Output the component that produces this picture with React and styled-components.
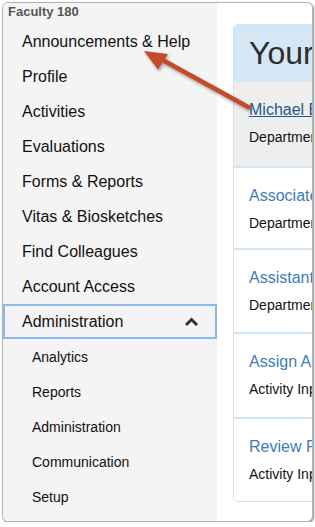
import styled, { createGlobalStyle } from "styled-components"

const Global = createGlobalStyle`
  html, body {
    margin : 0;
    padding : 0;
    background : #ffffff;
    font-family : "Liberation Sans", Arial, sans-serif;
  }
`;

const Frame = styled.div`
  position : relative;
  box-sizing : border-box;
  margin : 2px 0 0 2px;
  width : 311px;
  height : 520px;
  border : 1px solid #b4b4b4;
  border-radius : 6px;
  box-shadow : 1px 1px 2px rgba(0, 0, 0, 0.45);
  overflow : hidden;
  display : flex;
  background : #ffffff;
`;

const Sidebar = styled.div`
  width : 214px;
  flex : none;
  background : #f4f4f4;
  display : flex;
  flex-flow : column;
`;

const Brand = styled.div`
  font-size : 13px;
  font-weight : 700;
  line-height : 16px;
  color : #555555;
  padding : 1px 5px 4px;
`;

const NavItem = styled.div`
  box-sizing : border-box;
  height : 35px;
  display : flex;
  align-items : center;
  justify-content : space-between;
  padding-left : ${p => (p.$sub ? 29 : 19)}px;
  padding-right : 18px;
  font-size : ${p => (p.$sub ? 14 : 16)}px;
  color : #111111;
  border : ${p => (p.$active ? "2px solid #8cbaea" : "none")};
  ${p => p.$active && "padding-left : 17px; padding-right : 16px;"}
`;

const Main = styled.div`
  flex : 1;
  min-width : 0;
  overflow : hidden;
  padding : 21px 0 0 16px;
`;

const Card = styled.div`
  width : 300px;
  border : 1px solid #cfe2f2;
  border-radius : 5px;
  overflow : hidden;
`;

const CardHead = styled.div`
  height : 57px;
  background : #d5e7f5;
  display : flex;
  align-items : center;
  padding-left : 15px;
  font-size : 32px;
  color : #2e2e2e;
  white-space : nowrap;
`;

const Row = styled.div`
  box-sizing : border-box;
  height : ${p => p.$h}px;
  padding : 17px 15px 0;
  background : ${p => (p.$highlight ? "#eeeeee" : "#ffffff")};
  border-top : ${p => (p.$first ? "none" : "2px solid #d3e6f5")};
  white-space : nowrap;
`;

const RowLink = styled.div`
  font-size : 16px;
  line-height : 22px;
  color : ${p => (p.$underline ? "#24588a" : "#3d7dba")};
  text-decoration : ${p => (p.$underline ? "underline" : "none")};
  margin-bottom : 6px;
`;

const RowSub = styled.div`
  font-size : 14px;
  line-height : 20px;
  color : #111111;
`;

const Chevron = () => (
  <svg width="15" height="10" viewBox="0 0 15 10">
    <polyline points="2,8 7.5,2.5 13,8" fill="none" stroke="#333" strokeWidth="3" />
  </svg>
);

const Arrow = styled.svg`
  position : absolute;
  left : 0;
  top : 0;
  pointer-events : none;
  filter : drop-shadow(1px 2px 1.5px rgba(0, 0, 0, 0.35));
`;

const navs = [
  "Announcements & Help",
  "Profile",
  "Activities",
  "Evaluations",
  "Forms & Reports",
  "Vitas & Biosketches",
  "Find Colleagues",
  "Account Access",
];

const subs = ["Analytics", "Reports", "Administration", "Communication", "Setup"];

const rows = [
  { title: "Michael Brown", sub: "Department", h: 84, highlight: true },
  { title: "Associate Professor", sub: "Department", h: 82 },
  { title: "Assistant Professor", sub: "Department", h: 84 },
  { title: "Assign Activities", sub: "Activity Input", h: 85 },
  { title: "Review Profiles", sub: "Activity Input", h: 84 },
];

const App = () => {
  return (<>
    <Global />
    <Frame>
      <Sidebar>
        <Brand>Faculty 180</Brand>
        {navs.map((n) => (
          <NavItem key={n}>{n}</NavItem>
        ))}
        <NavItem $active>
          Administration
          <Chevron />
        </NavItem>
        {subs.map((s) => (
          <NavItem key={s} $sub>{s}</NavItem>
        ))}
      </Sidebar>
      <Main>
        <Card>
          <CardHead>Your Activities</CardHead>
          {rows.map((r, i) => (
            <Row key={r.title} $h={r.h} $first={i === 0} $highlight={r.highlight}>
              <RowLink $underline={r.highlight}>{r.title}</RowLink>
              <RowSub>{r.sub}</RowSub>
            </Row>
          ))}
        </Card>
      </Main>
      <Arrow width="311" height="520" viewBox="2 2 311 520">
        <line x1="249" y1="107" x2="158" y2="57" stroke="#c44b25" strokeWidth="4.5" />
        <polygon points="143,50 157,68.5 167,53" fill="#c44b25" />
      </Arrow>
    </Frame>
  </>)
}

export default App
